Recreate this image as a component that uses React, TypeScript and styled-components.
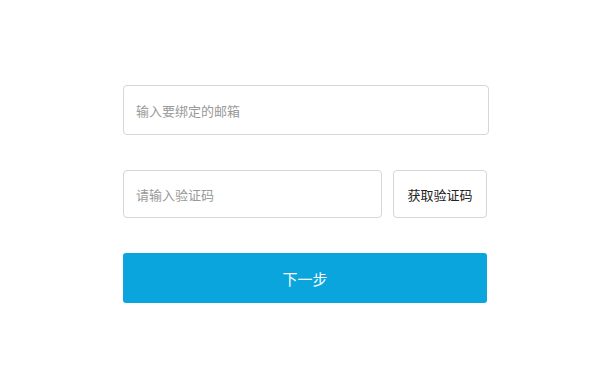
import styled, { createGlobalStyle } from "styled-components";

const GlobalStyle = createGlobalStyle`
  html, body {
    margin: 0;
    padding: 0;
    background: #ffffff;
  }
  body {
    font-family: "Noto Sans CJK SC", "Noto Sans", sans-serif;
  }
`;

const Page = styled.div`
  width: 600px;
  height: 380px;
  padding: 85px 0 0 123px;
  box-sizing: border-box;
`;

const Form = styled.form`
  width: 366px;
  display: flex;
  flex-direction: column;
`;

const Row = styled.div<{ w: number }>`
  display: flex;
  gap: 11px;
  width: ${({ w }) => w}px;
  margin-bottom: 35px;
`;

const Field = styled.input<{ h: number }>`
  flex: 1;
  min-width: 0;
  height: ${({ h }) => h}px;
  box-sizing: border-box;
  border: 1px solid #d6d6d6;
  border-radius: 4px;
  padding: 0 12px;
  font-family: inherit;
  font-size: 13px;
  color: #333;
  outline: none;
  background: #fff;

  &::placeholder {
    color: #999999;
  }
`;

const CodeButton = styled.button`
  width: 94px;
  height: 48px;
  flex-shrink: 0;
  box-sizing: border-box;
  border: 1px solid #d6d6d6;
  border-radius: 4px;
  background: #fff;
  font-family: inherit;
  font-size: 13px;
  color: #222;
  padding: 0;
  cursor: pointer;
`;

const NextButton = styled.button`
  width: 364px;
  height: 50px;
  border: none;
  border-radius: 3px;
  background: #0aa5dc;
  color: #fff;
  font-family: inherit;
  font-size: 15px;
  padding: 0;
  cursor: pointer;
`;

const App = () => {
  return (
    <>
      <GlobalStyle />
      <Page>
        <Form onSubmit={(e) => e.preventDefault()}>
          <Row w={366}>
            <Field h={50} placeholder="输入要绑定的邮箱" />
          </Row>
          <Row w={364}>
            <Field h={48} placeholder="请输入验证码" />
            <CodeButton type="button">获取验证码</CodeButton>
          </Row>
          <NextButton type="submit">下一步</NextButton>
        </Form>
      </Page>
    </>
  );
};

export default App;
